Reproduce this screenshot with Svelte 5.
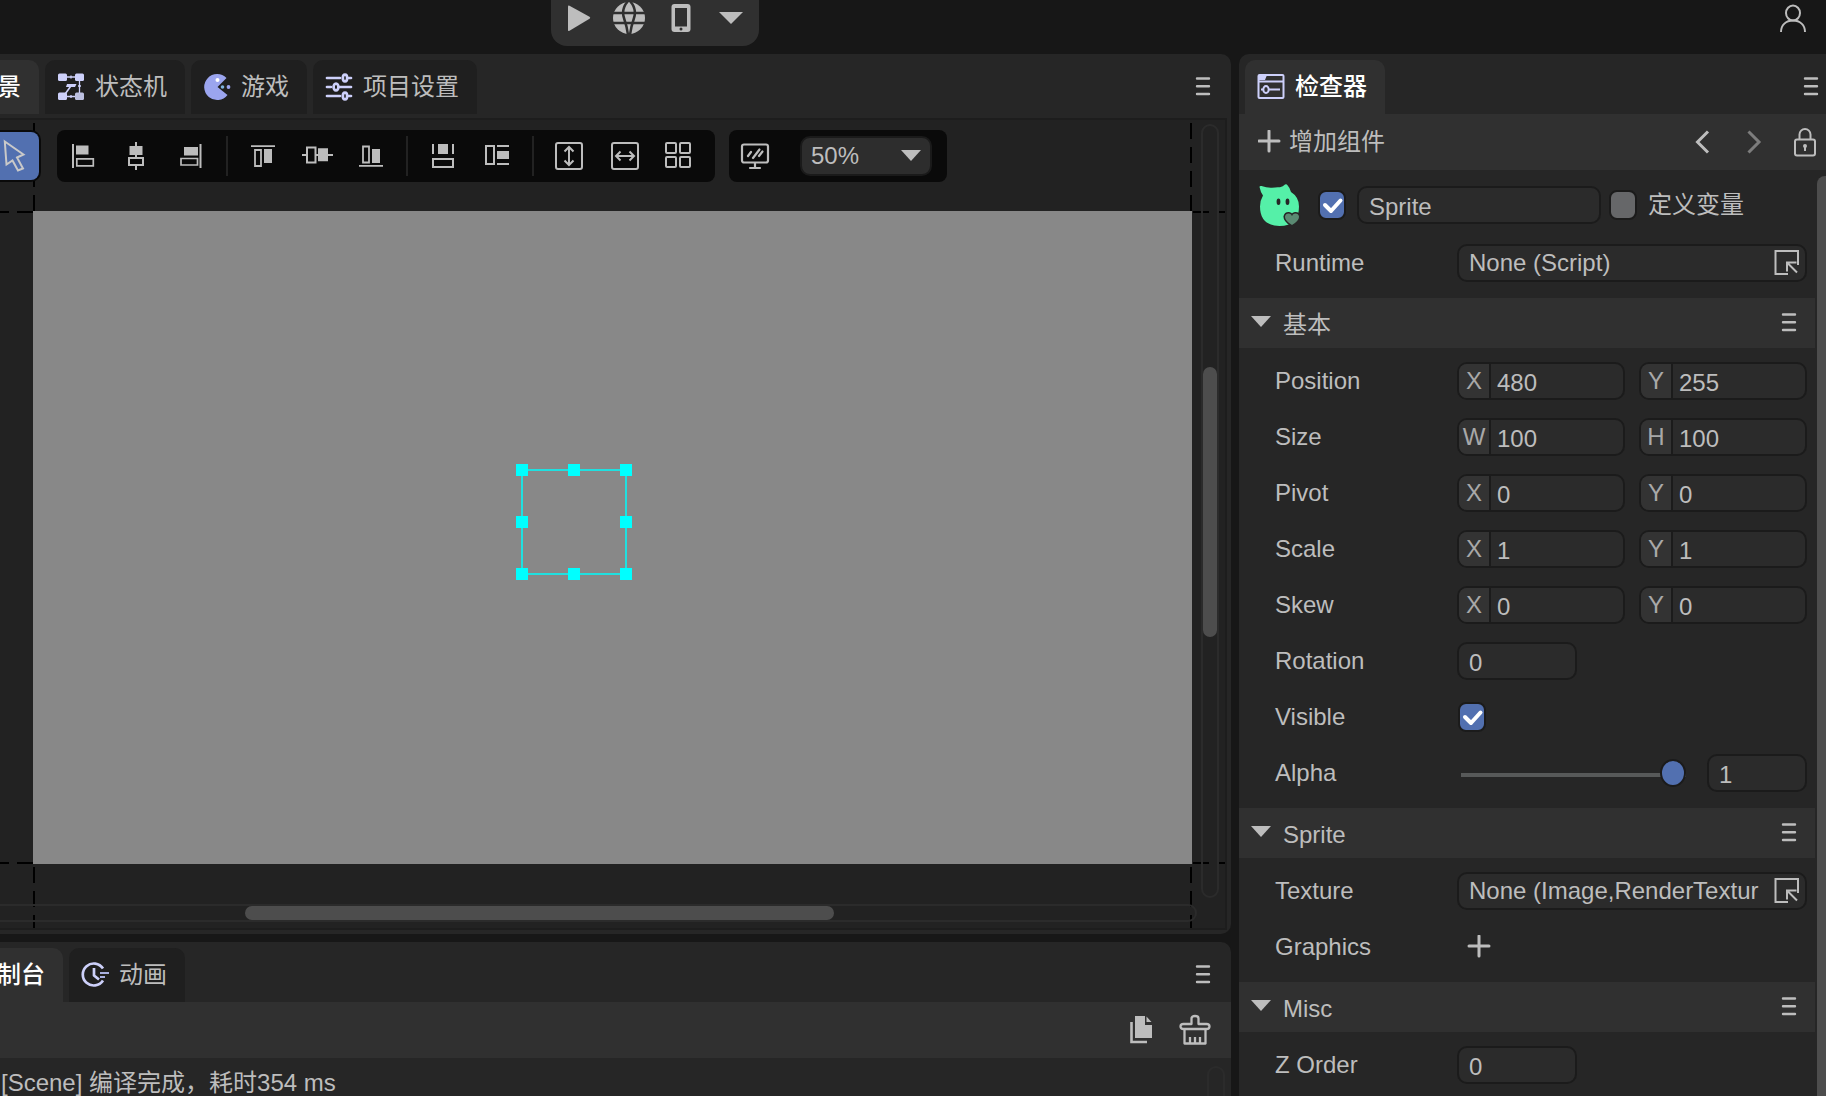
<script>
  let name = $state('Sprite');
  let enabled = $state(true);
  let declared = $state(false);
  let visible = $state(true);
  let alpha = $state(1);
  let zoom = $state('50%');
  let rotation = $state('0');
  let zOrder = $state('0');

  let vectors = $state([
    { label: 'Position', parts: [{ axis: 'X', value: '480' }, { axis: 'Y', value: '255' }] },
    { label: 'Size', parts: [{ axis: 'W', value: '100' }, { axis: 'H', value: '100' }] },
    { label: 'Pivot', parts: [{ axis: 'X', value: '0' }, { axis: 'Y', value: '0' }] },
    { label: 'Scale', parts: [{ axis: 'X', value: '1' }, { axis: 'Y', value: '1' }] },
    { label: 'Skew', parts: [{ axis: 'X', value: '0' }, { axis: 'Y', value: '0' }] }
  ]);

  const handles = ['nw', 'n', 'ne', 'w', 'e', 'sw', 's', 'se'];
</script>

{#snippet burger()}
  <svg width="16" height="20" viewBox="0 0 16 20" fill="none" stroke="currentColor" stroke-width="2.400" stroke-linecap="round"><path d="M2 1.500h12M2 9.200h12M2 17h12" /></svg>
{/snippet}

{#snippet check()}
  <svg class="tick" width="28" height="30" viewBox="0 0 28 30" fill="none" stroke="#fff" stroke-width="4" stroke-linecap="round" stroke-linejoin="round"><path d="M7 15l6 6 9.500-10.500" /></svg>
{/snippet}

{#snippet picker()}
  <svg width="26" height="26" viewBox="0 0 26 26" fill="none" stroke="currentColor" stroke-width="2"><path d="M25 15V1H2.500V24h12.500M14 21.500v-9h9.500M14.500 13l9.500 9.500" /></svg>
{/snippet}

{#snippet section(title)}
  <header class="section">
    <button class="fold" aria-expanded="true">
      <svg width="20" height="12" viewBox="0 0 20 12" fill="currentColor"><path d="M0 0h20l-10 11z" /></svg>
      <span>{title}</span>
    </button>
    <button class="icon" aria-label="{title} menu">{@render burger()}</button>
  </header>
{/snippet}

<div class="app">
  <header class="topbar">
    <div class="run">
      <button aria-label="运行">
        <svg width="32" height="32" viewBox="0 0 32 32" fill="currentColor"><path d="M7 4.500q0-1.500 1.500-.7l20 11q1.500 1 0 2L8.500 28.700q-1.500.8-1.500-.7z" /></svg>
      </button>
      <button aria-label="浏览器">
        <svg width="32" height="32" viewBox="0 0 32 32"><circle cx="16" cy="16" r="16" fill="currentColor" /><g fill="none" stroke="#303030" stroke-width="2.500"><path d="M0 11h32M0 21h32" /><path d="M15 -1Q8 7 11 16T15 33M17 -1Q24 7 21 16T17 33" /></g></svg>
      </button>
      <button aria-label="手机">
        <svg width="32" height="32" viewBox="0 0 32 32"><rect x="6.500" y="2" width="19" height="28" rx="3" fill="currentColor" /><rect x="10" y="6" width="12" height="18.500" fill="#303030" /><circle cx="16" cy="27" r="1.500" fill="#303030" /></svg>
      </button>
      <button aria-label="更多">
        <svg width="32" height="32" viewBox="0 0 32 32" fill="currentColor"><path d="M2 10h24L14 22z" /></svg>
      </button>
    </div>
    <button class="icon" aria-label="账户">
      <svg width="32" height="32" viewBox="0 0 32 32" fill="none" stroke="currentColor" stroke-width="2"><ellipse cx="16" cy="10" rx="7" ry="7.500" /><path d="M4 29c0-7 5-11.500 12-11.500S28 22 28 29" /></svg>
    </button>
  </header>

  <div class="workspace">
    <div class="left">
      <section class="panel scene">
        <header class="tabs">
          <button class="tab active cut scene-tab"><span>场景</span></button>
          <button class="tab">
            <svg width="28" height="28" viewBox="0 0 28 28" fill="#cdd0fa"><rect x="1" y="0.500" width="9" height="7.500" rx="1.500" /><rect x="18" y="0.500" width="9" height="7.500" rx="1.500" /><rect x="1" y="19.500" width="9" height="7.500" rx="1.500" /><rect x="18" y="19.500" width="9" height="7.500" rx="1.500" fill="#bcc0e0" /><path d="M10 4h8M10 23.500h8M22.500 8v12M14 2.500v3M14 22v3M21 13h3" stroke="#cdd0fa" stroke-width="1.300" fill="none" /><path d="M8.500 20.500l5-7" stroke="#cdd0fa" stroke-width="1.600" /><path d="M10 11h9.500l-1.500 3H9z" /></svg>
            <span>状态机</span>
          </button>
          <button class="tab">
            <svg width="28" height="28" viewBox="0 0 28 28"><path d="M23.500 5A13 13 0 1 0 24.500 22L14.500 14z" fill="#9ba5ef" /><circle cx="14.500" cy="7" r="2" fill="#fff" /><circle cx="19.500" cy="14" r="1.800" fill="#7fb4e0" /><circle cx="25.500" cy="14" r="1.900" fill="#9ba5ef" /></svg>
            <span>游戏</span>
          </button>
          <button class="tab">
            <svg width="28" height="28" viewBox="0 0 28 28" fill="none" stroke="#cdd0fa" stroke-width="2.700" stroke-linecap="round"><path d="M2 5h13M24 5h2M2 14h4M15 14h11M2 23h13M24 23h2" /><ellipse cx="20" cy="5" rx="2.200" ry="3.400" /><ellipse cx="11" cy="14" rx="2.400" ry="3.400" /><ellipse cx="20" cy="23" rx="2.200" ry="3.400" /></svg>
            <span>项目设置</span>
          </button>
          <button class="icon menu" aria-label="场景菜单">{@render burger()}</button>
        </header>

        <div class="view">
          <i class="guide v start"></i>
          <i class="guide v end"></i>
          <i class="guide h top"></i>
          <i class="guide h bottom"></i>
          <div class="stage">
            <div class="selection">
              {#each handles as h}<i class="handle {h}"></i>{/each}
            </div>
          </div>

          <div class="tools">
            <div class="group pointer">
              <button aria-label="选择">
                <svg width="39" height="48" viewBox="0 0 39 48" fill="none" stroke="#c9c9c9" stroke-width="2"><path d="M4.800 9.500L23.500 22.500 17 25.500 23 36.500 18 38.500 12.500 28.500 6.500 32.500z" /></svg>
              </button>
            </div>
            <div class="group align">
              <button aria-label="左对齐"><svg width="32" height="32" viewBox="0 0 32 32"><path d="M4 4h2v24H4zM8 5.500h12.500v9H8z" fill="currentColor" /><path d="M8.800 18.800h16.500v7H8.800z" fill="none" stroke="currentColor" stroke-width="1.700" /></svg></button>
              <button aria-label="水平居中"><svg width="32" height="32" viewBox="0 0 32 32"><path d="M13 2h2v28h-2zM7.500 6h13v9h-13z" fill="currentColor" /><path d="M7 18h14v7H7z" fill="#0a0a0a" stroke="currentColor" stroke-width="2" /></svg></button>
              <button aria-label="右对齐"><svg width="32" height="32" viewBox="0 0 32 32"><path d="M23.500 4h2v24h-2zM8 7h14v8.500H8z" fill="currentColor" /><path d="M5 18.500h16.500v6.500H5z" fill="none" stroke="currentColor" stroke-width="1.700" /></svg></button>
              <i class="sep"></i>
              <button aria-label="顶对齐"><svg width="32" height="32" viewBox="0 0 32 32"><path d="M3 5.300h24v1.700H3zM16 9h8v14h-8z" fill="currentColor" /><path d="M7 10h6v16H7z" fill="none" stroke="currentColor" stroke-width="1.800" /></svg></button>
              <button aria-label="垂直居中"><svg width="32" height="32" viewBox="0 0 32 32"><path d="M0 14h31v2H0zM16 8.300h10v13H16z" fill="currentColor" /><path d="M5 7.500h8.500v15H5z" fill="#0a0a0a" stroke="currentColor" stroke-width="2" /></svg></button>
              <button aria-label="底对齐"><svg width="32" height="32" viewBox="0 0 32 32"><path d="M3 25h24v1.700H3zM16 9h8v14h-8z" fill="currentColor" /><path d="M7 6.500h6v16H7z" fill="none" stroke="currentColor" stroke-width="1.800" /></svg></button>
              <i class="sep"></i>
              <button aria-label="等宽"><svg width="32" height="32" viewBox="0 0 32 32"><path d="M4 4h2v10H4zM24 4h2v10h-2zM10 4h10v10H10z" fill="currentColor" /><path d="M5 19h20v8H5z" fill="none" stroke="currentColor" stroke-width="2" /></svg></button>
              <button aria-label="等高"><svg width="32" height="32" viewBox="0 0 32 32"><path d="M15 5h12v2H15zM15 23h12v2H15zM15 11h12v8H15z" fill="currentColor" /><path d="M4 6h8v18H4z" fill="none" stroke="currentColor" stroke-width="2" /></svg></button>
              <i class="sep"></i>
              <button aria-label="适应高度"><svg width="32" height="32" viewBox="0 0 32 32" fill="none" stroke="currentColor" stroke-width="2"><rect x="2" y="3" width="26" height="26" rx="2" /><path d="M15 7v18M10.500 11.500L15 7l4.500 4.500M10.500 20.500L15 25l4.500-4.500" /></svg></button>
              <button aria-label="适应宽度"><svg width="32" height="32" viewBox="0 0 32 32" fill="none" stroke="currentColor" stroke-width="2"><rect x="4" y="3" width="26" height="26" rx="2" /><path d="M8 16h18M12.500 11.500L8 16l4.500 4.500M21.500 11.500L26 16l-4.500 4.500" /></svg></button>
              <button aria-label="网格"><svg width="32" height="32" viewBox="0 0 32 32" fill="none" stroke="currentColor" stroke-width="2"><rect x="4" y="3" width="10" height="10" rx="1" /><rect x="18" y="3" width="10" height="10" rx="1" /><rect x="4" y="17" width="10" height="10" rx="1" /><rect x="18" y="17" width="10" height="10" rx="1" /></svg></button>
            </div>
            <div class="group">
              <button aria-label="分辨率"><svg width="32" height="32" viewBox="0 0 32 32" fill="none" stroke="currentColor" stroke-width="2.200" stroke-linecap="round"><rect x="2" y="4.500" width="26" height="18" rx="2" /><path d="M15 23v5M10 28h10M8 16l3-4M13 18l6.500-8.500M19 16l3.500-4.500" /></svg></button>
              <div class="zoom">
                <select aria-label="缩放" bind:value={zoom}>
                  <option>50%</option>
                  <option>100%</option>
                </select>
                <svg width="20" height="11" viewBox="0 0 20 11" fill="currentColor"><path d="M0 0h20L10 11z" /></svg>
              </div>
            </div>
          </div>

          <div class="track vertical"><i></i></div>
          <div class="track horizontal"><i></i></div>
        </div>
      </section>

      <section class="panel console">
        <header class="tabs">
          <button class="tab active cut console-tab"><span>控制台</span></button>
          <button class="tab">
            <svg width="28" height="28" viewBox="0 0 28 28" fill="none" stroke="#cdd0fa" stroke-width="2.700"><path d="M22 7.500A11 11 0 1 0 22 19.500" /><path d="M13 7v7.500l5 4" stroke-linejoin="round" /><path d="M19 12h9M19 16h5" stroke="#a9b0e0" stroke-width="2.200" /></svg>
            <span>动画</span>
          </button>
          <button class="icon menu" aria-label="控制台菜单">{@render burger()}</button>
        </header>
        <div class="bar actions">
          <button class="icon" aria-label="复制">
            <svg width="32" height="32" viewBox="0 0 32 32" fill="currentColor"><path d="M11 2h10v9h7v13H11zM22.500 2.500L27.500 8h-5z" /><path d="M7.500 8v20H23" fill="none" stroke="currentColor" stroke-width="2.600" /></svg>
          </button>
          <button class="icon" aria-label="清空">
            <svg width="32" height="32" viewBox="0 0 32 32" fill="none" stroke="currentColor" stroke-width="2.300" stroke-linejoin="round"><path d="M12.500 10V4.500q0-2.500 3.500-2.500t3.500 2.500V10h8q3 0 3 2.500T27.500 15h-23q-3 0-3-2.500T4.500 10z" /><path d="M5.500 15v14.500h21V15M11 29v-6M16 29v-6M21 29v-6" /></svg>
          </button>
        </div>
        <div class="log">
          <p>[Scene] 编译完成，耗时354 ms</p>
          <div class="track vertical"></div>
        </div>
      </section>
    </div>

    <aside class="panel inspector">
      <header class="tabs">
        <button class="tab active">
          <svg width="28" height="28" viewBox="0 0 28 28" fill="none" stroke="#cdd0fa" stroke-width="2"><rect x="1.500" y="2" width="25" height="23" rx="1" /><path d="M1 8.500h26" stroke-width="2" /><path d="M2 2h8l-2 5H2z" fill="#cdd0fa" stroke="none" /><ellipse cx="9" cy="16.500" rx="2.700" ry="3.500" /><path d="M4 16.500h2M12 16.500h11" /></svg>
          <span>检查器</span>
        </button>
        <button class="icon menu" aria-label="检查器菜单">{@render burger()}</button>
      </header>
      <div class="bar">
        <button class="add">
          <svg width="24" height="24" viewBox="0 0 24 24" stroke="currentColor" stroke-width="3" stroke-linecap="round"><path d="M11 1v20M1 11h20" /></svg>
          <span>增加组件</span>
        </button>
        <button class="icon" aria-label="后退"><svg width="24" height="28" viewBox="0 0 24 28" fill="none" stroke="currentColor" stroke-width="3"><path d="M17 3.500L6.500 14 17 24.500" /></svg></button>
        <button class="icon dim" aria-label="前进"><svg width="24" height="28" viewBox="0 0 24 28" fill="none" stroke="currentColor" stroke-width="3"><path d="M6.500 3.500L17 14 6.500 24.500" /></svg></button>
        <button class="icon" aria-label="锁定"><svg width="24" height="30" viewBox="0 0 24 30" fill="none" stroke="currentColor" stroke-width="2"><rect x="2" y="12.500" width="20" height="16" rx="2" /><path d="M6.500 12.500V7.500a5.500 5.500 0 0 1 11 0v5" /><circle cx="12" cy="19" r="1" fill="currentColor" /><path d="M12 18v6" /></svg></button>
      </div>

      <div class="scroll">
        <div class="content">
          <div class="identity">
            <svg width="42" height="42" viewBox="0 0 42 42"><path d="M.5 3Q.5 1.500 2.500 2 8 4 13 3.700q5-.8 8-.4Q24 2.500 26 .5q1.500-1 2.500.8Q31 4 32 8q8 5 8 14.500 0 19.500-19.500 19.500Q1 41.500 1 22.500q0-6 3-11Q1.500 8 .5 3z" fill="#55f0a8" /><ellipse cx="19.500" cy="17.800" rx="1.900" ry="3.300" fill="#262626" /><ellipse cx="28.500" cy="17.800" rx="1.900" ry="3.300" fill="#262626" /><path d="M33 42q-8-5-7.800-9.500.8-4 4.800-3.800 2.200.2 3 1.800.8-1.600 3-1.800 4-.2 4.800 3.800Q41 37 33 42z" fill="#5a8a72" stroke="#262626" stroke-width="1.500" /></svg>
            <span class="box"><input type="checkbox" aria-label="启用" bind:checked={enabled} />{#if enabled}{@render check()}{/if}</span>
            <input class="field name" aria-label="名称" bind:value={name} />
            <label class="declare"><span class="box"><input type="checkbox" bind:checked={declared} />{#if declared}{@render check()}{/if}</span><span>定义变量</span></label>
          </div>
          <div class="row">
            <label for="runtime">Runtime</label>
            <div class="field resource"><input id="runtime" readonly value="None (Script)" /><button aria-label="选择脚本">{@render picker()}</button></div>
          </div>

          <div class="rows-end"></div>
          {@render section('基本')}
          <div class="rows">
            {#each vectors as v}
              <div class="row">
                <span class="label">{v.label}</span>
                <div class="pair">
                  {#each v.parts as p}
                    <label class="field axis"><span>{p.axis}</span><input aria-label="{v.label} {p.axis}" bind:value={p.value} /></label>
                  {/each}
                </div>
              </div>
            {/each}
            <div class="row">
              <label for="rotation">Rotation</label>
              <input id="rotation" class="field short" bind:value={rotation} />
            </div>
            <div class="row">
              <label for="visible">Visible</label>
              <span class="box"><input id="visible" type="checkbox" bind:checked={visible} />{#if visible}{@render check()}{/if}</span>
            </div>
            <div class="row">
              <label for="alpha">Alpha</label>
              <input id="alpha" class="slider" type="range" min="0" max="1" step="0.01" bind:value={alpha} />
              <input class="field amount" aria-label="Alpha value" bind:value={alpha} />
            </div>
          </div>

          {@render section('Sprite')}
          <div class="rows">
            <div class="row">
              <label for="texture">Texture</label>
              <div class="field resource"><input id="texture" readonly value="None (Image,RenderTextur" /><button aria-label="选择纹理">{@render picker()}</button></div>
            </div>
            <div class="row">
              <span class="label">Graphics</span>
              <button class="icon plus" aria-label="添加 Graphics"><svg width="24" height="24" viewBox="0 0 24 24" stroke="currentColor" stroke-width="3" stroke-linecap="round"><path d="M12 1v20M2 11h20" /></svg></button>
            </div>
          </div>

          {@render section('Misc')}
          <div class="rows">
            <div class="row">
              <label for="z">Z Order</label>
              <input id="z" class="field short" bind:value={zOrder} />
            </div>
          </div>
        </div>
        <div class="gutter"><i></i></div>
      </div>
    </aside>
  </div>
</div>

<style>
  :global(body) {
    background: #171717;
    overflow: hidden;
  }
  .app {
    display: flex;
    flex-direction: column;
    height: 100vh;
    background: #171717;
    color: #bdbdbd;
    font: 24px/32px 'Liberation Sans', 'Noto Sans CJK SC', sans-serif;
  }
  .app :is(button, input, select) {
    box-sizing: border-box;
    margin: 0;
    padding: 0;
    border: 0;
    background: none;
    color: inherit;
    font: inherit;
    outline: none;
    border-radius: 0;
  }
  svg {
    display: block;
    flex: none;
  }
  .icon {
    display: grid;
    place-items: center;
    flex: none;
  }

  .topbar {
    display: flex;
    align-items: flex-start;
    justify-content: space-between;
    flex: none;
    height: 54px;
    padding: 0 17px 0 551px;
    box-sizing: border-box;
  }
  .topbar > .icon {
    padding-top: 3px;
  }
  .run {
    display: flex;
    height: 46px;
    border-radius: 0 0 16px 16px;
    background: #303030;
  }
  .run button {
    display: grid;
    justify-items: center;
    align-content: start;
    width: 52px;
    padding-top: 2px;
  }

  .workspace {
    display: grid;
    grid-template-columns: minmax(0, 1fr) minmax(0, 587px);
    gap: 8px;
    flex: 1;
    min-height: 0;
  }
  .left {
    display: flex;
    flex-direction: column;
    gap: 8px;
    min-height: 0;
  }
  .panel {
    display: flex;
    flex-direction: column;
    background: #262626;
    overflow: hidden;
    min-height: 0;
  }
  .scene {
    flex: 1;
    border-radius: 0 10px 10px 0;
  }
  .console {
    flex: none;
    height: 154px;
    border-radius: 0 10px 0 0;
  }
  .inspector {
    border-radius: 10px 0 0 0;
  }

  .tabs {
    display: flex;
    align-items: flex-start;
    gap: 6px;
    flex: none;
    height: 60px;
    padding: 6px 20px 0 0;
    box-sizing: border-box;
  }
  .scene .tabs {
    height: 64px;
  }
  .inspector .tabs {
    padding: 6px 7px 0 6px;
  }
  .tab {
    display: flex;
    align-items: center;
    gap: 10px;
    height: 54px;
    white-space: nowrap;
  }
  .app .tab {
    padding: 0 18px 0 12px;
    border-radius: 10px 10px 0 0;
    background: #1f1f1f;
  }
  .app .tab.active {
    background: #303030;
    color: #fff;
    font-weight: 500;
  }
  .app .tab.cut {
    justify-content: flex-end;
    padding-left: 0;
    border-radius: 0 10px 0 0;
    overflow: hidden;
  }
  .scene-tab {
    width: 39px;
  }
  .console-tab {
    width: 63px;
  }
  .menu {
    height: 54px;
    margin-left: auto !important;
  }

  .view {
    position: relative;
    flex: 1;
    margin: 0 4px 4px 0;
    border: 2px solid #1d1d1d;
    border-left: 0;
    background: #222;
    overflow: hidden;
  }
  .guide {
    position: absolute;
  }
  .guide.v {
    top: 0;
    bottom: 0;
    width: 2px;
    background: linear-gradient(#000 16px, transparent 16px) 0 3px / 2px 24px;
  }
  .guide.h {
    left: 0;
    right: 0;
    height: 2px;
    background: linear-gradient(90deg, #000 16px, transparent 16px) -7px 0 / 24px 2px;
  }
  .start {
    left: 33px;
  }
  .end {
    right: 33px;
  }
  .top {
    top: 91px;
  }
  .bottom {
    bottom: 64px;
  }
  .stage {
    position: absolute;
    inset: 91px 33px 64px 33px;
    background: #888;
  }
  .selection {
    position: absolute;
    left: 488px;
    top: 258px;
    width: 102px;
    height: 102px;
    border: 2px solid #1fe0e0;
  }
  .handle {
    position: absolute;
    width: 12px;
    height: 12px;
    margin: -6px;
    left: 51px;
    top: 51px;
    background: #0ff;
  }
  .nw, .w, .sw { left: -1px; }
  .ne, .e, .se { left: 103px; }
  .nw, .n, .ne { top: -1px; }
  .sw, .s, .se { top: 103px; }

  .tools {
    position: absolute;
    left: 0;
    top: 10px;
    display: flex;
    gap: 14px;
  }
  .group {
    display: flex;
    align-items: center;
    height: 52px;
    padding-right: 15px;
    border-radius: 8px;
    background: #0a0a0a;
  }
  .group button {
    display: grid;
    place-items: center;
    width: 54px;
    height: 52px;
  }
  .group.align {
    margin-left: 2px;
    padding-right: 10px;
  }
  .group.pointer {
    padding-right: 2px;
    border-radius: 0 10px 10px 0;
  }
  .app .pointer button {
    width: 39px;
    height: 48px;
    border-radius: 0 8px 8px 0;
    background: #5270b0;
  }
  .sep {
    width: 2px;
    height: 40px;
    margin: 0 9px 0 7px;
    background: #222;
  }
  .zoom {
    position: relative;
    width: 132px;
    margin-left: 17px;
  }
  .app .zoom select {
    display: block;
    appearance: none;
    width: 100%;
    height: 40px;
    padding: 0 36px 0 9px;
    border: 2px solid #1a1a1a;
    border-radius: 10px;
    background: #2d2d2d;
  }
  .zoom svg {
    position: absolute;
    right: 11px;
    top: 14px;
    pointer-events: none;
  }

  .track {
    position: absolute;
    box-sizing: border-box;
    border: 2px solid #2b2b2b;
    border-radius: 9px;
  }
  .track i {
    position: absolute;
    border-radius: 7px;
    background: #4d4d4d;
  }
  .view .vertical {
    right: 6px;
    top: 4px;
    bottom: 30px;
    width: 18px;
  }
  .view .vertical i {
    inset: 31.300% 0 33.600%;
  }
  .view .horizontal {
    left: -20px;
    right: 28px;
    bottom: 6px;
    height: 18px;
  }
  .view .horizontal i {
    inset: 0 29.800% 0 21.700%;
  }

  .bar {
    display: flex;
    align-items: center;
    flex: none;
    height: 56px;
    padding: 0 9px 0 19px;
    box-sizing: border-box;
    background: #303030;
    gap: 27px;
  }
  .bar.actions {
    justify-content: flex-end;
    gap: 23px;
    padding-right: 20px;
  }
  .add {
    display: flex;
    align-items: center;
    gap: 7px;
    margin-right: auto !important;
  }
  .dim {
    opacity: 0.55;
  }
  .log {
    position: relative;
    flex: 1;
  }
  .log p {
    margin: 0;
    padding: 9px 0 0 1px;
    white-space: nowrap;
  }
  .log .track {
    right: 6px;
    top: 8px;
    width: 18px;
    height: 200px;
  }

  .scroll {
    display: flex;
    flex: 1;
    min-height: 0;
    overflow: hidden;
  }
  .content {
    flex: 1;
    min-width: 0;
  }
  .gutter {
    display: flex;
    width: 11px;
    padding: 6px 0 0 2px;
    box-sizing: border-box;
  }
  .gutter i {
    flex: 1;
    border-radius: 8px 0 0 0;
    background: #4d4d4d;
  }
  .identity {
    display: flex;
    align-items: center;
    height: 60px;
    padding: 5px 8px 0 20px;
  }
  .identity .box {
    margin-left: 17px;
  }
  .app .name {
    flex: 0 1 244px;
    margin: 0 8px 0 11px;
  }
  .declare {
    display: flex;
    align-items: center;
    gap: 11px;
    white-space: nowrap;
  }
  .identity .declare .box {
    margin-left: 0;
  }
  .rows-end {
    height: 7px;
  }
  .rows {
    padding: 5px 0 7px;
  }
  .row {
    display: flex;
    align-items: center;
    height: 56px;
    padding: 0 8px 0 36px;
  }
  .row > label,
  .label {
    flex: none;
    width: 182px;
  }
  .row > .box {
    margin-left: 1px;
  }
  .field {
    box-sizing: border-box;
    height: 38px;
    min-width: 0;
  }
  .app .field {
    border: 2px solid #1b1b1b;
    border-radius: 10px;
    background: #2b2b2b;
  }
  .app input.field {
    padding: 4px 10px 0;
  }
  .pair {
    display: flex;
    gap: 14px;
    flex: 1;
    min-width: 0;
  }
  .axis {
    display: flex;
    flex: 1;
    overflow: hidden;
  }
  .axis span {
    display: grid;
    place-items: center;
    flex: none;
    width: 30px;
    border-right: 2px solid #1b1b1b;
    background: #333;
    color: #a8a8a8;
  }
  .app .axis input {
    flex: 1;
    width: 0;
    padding: 4px 6px 0;
  }
  .short {
    width: 120px;
  }
  .amount {
    width: 100px;
  }
  .resource {
    display: flex;
    align-items: center;
    flex: 1;
    padding: 0 6px 0 10px;
    gap: 8px;
  }
  .resource input {
    flex: 1;
    min-width: 0;
  }
  .box {
    display: grid;
    flex: none;
    width: 28px;
    height: 30px;
  }
  .box > input,
  .box > .tick {
    grid-area: 1 / 1;
  }
  .tick {
    pointer-events: none;
  }
  .app .box input {
    appearance: none;
    width: 28px;
    height: 30px;
    border: 2px solid #1b1b1b;
    border-radius: 8px;
    background: #666769;
  }
  .app .box input:checked {
    background: #5270b0;
  }
  .app .slider {
    appearance: none;
    flex: 1;
    min-width: 0;
    height: 30px;
    margin: 0 21px 0 4px;
    padding-top: 4px;
  }
  .slider::-webkit-slider-runnable-track {
    height: 4px;
    background: #575959;
  }
  .slider::-webkit-slider-thumb {
    appearance: none;
    box-sizing: border-box;
    width: 26px;
    height: 28px;
    margin-top: -14px;
    border: 2px solid #1b1b1b;
    border-radius: 50%;
    background: #5270b0;
  }
  .plus {
    margin-left: 10px !important;
  }
  .section {
    display: flex;
    align-items: center;
    justify-content: space-between;
    height: 50px;
    padding: 0 18px 0 12px;
    background: #303030;
  }
  .fold {
    display: flex;
    align-items: center;
    gap: 12px;
  }
  .fold svg {
    margin-bottom: 2px;
  }
  .fold span {
    padding-top: 4px;
  }
</style>
